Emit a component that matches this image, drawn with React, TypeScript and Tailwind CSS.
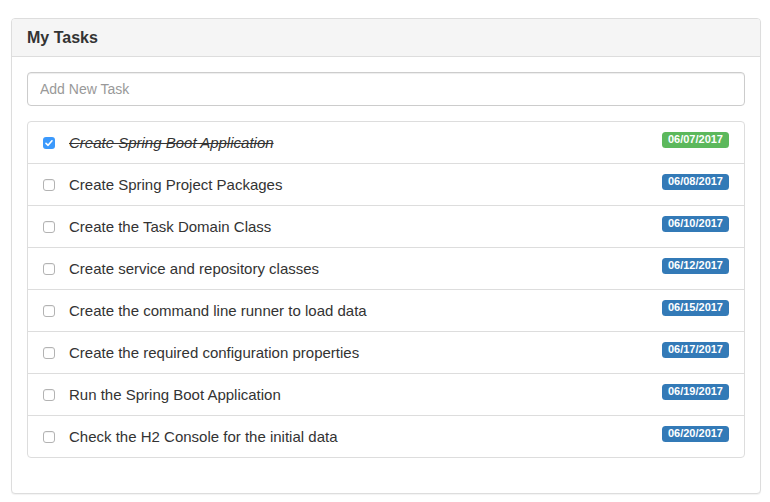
import React from 'react';

interface Task {
  name: string;
  date: string;
  done: boolean;
}

const tasks: Task[] = [
  { name: 'Create Spring Boot Application', date: '06/07/2017', done: true },
  { name: 'Create Spring Project Packages', date: '06/08/2017', done: false },
  { name: 'Create the Task Domain Class', date: '06/10/2017', done: false },
  { name: 'Create service and repository classes', date: '06/12/2017', done: false },
  { name: 'Create the command line runner to load data', date: '06/15/2017', done: false },
  { name: 'Create the required configuration properties', date: '06/17/2017', done: false },
  { name: 'Run the Spring Boot Application', date: '06/19/2017', done: false },
  { name: 'Check the H2 Console for the initial data', date: '06/20/2017', done: false },
];

const Checkbox: React.FC<{ checked: boolean }> = ({ checked }) =>
  checked ? (
    <span className="flex h-[12px] w-[12px] shrink-0 items-center justify-center rounded-[3px] bg-[#3b99fc]">
      <svg viewBox="0 0 12 12" className="h-[12px] w-[12px]">
        <path d="M3 6.3 L5.1 8.3 L9 3.8" fill="none" stroke="white" strokeWidth="1.6" strokeLinecap="round" strokeLinejoin="round" />
      </svg>
    </span>
  ) : (
    <span className="h-[12px] w-[12px] shrink-0 rounded-[3px] border border-[#b3b3b3] bg-white shadow-[inset_0_1px_0_rgba(0,0,0,0.05)]" />
  );

const App: React.FC = () => {
  return (
    <div
      className="min-h-[502px] bg-white pt-[18px] pl-[11px] pr-[9px] text-[14px] text-[#333]"
      style={{ fontFamily: '"Liberation Sans", Arial, sans-serif' }}
    >
      {/* Panel */}
      <div className="rounded-[4px] border border-[#ddd] bg-white shadow-[0_1px_1px_rgba(0,0,0,0.05)]">
        <div className="rounded-t-[3px] border-b border-[#ddd] bg-[#f5f5f5] px-[15px] py-[10px]">
          <h3 className="text-[16px] font-bold leading-[17px] text-[#333]">My Tasks</h3>
        </div>
        <div className="p-[15px]">
          <input
            type="text"
            placeholder="Add New Task"
            className="block h-[34px] w-full rounded-[4px] border border-[#ccc] px-3 py-[6px] text-[14px] text-[#555] shadow-[inset_0_1px_1px_rgba(0,0,0,0.075)] outline-none placeholder:text-[#999]"
          />
          <ul className="mt-[15px] mb-[20px]">
            {tasks.map((task, i) => (
              <li
                key={task.name}
                className={`flex h-[43px] items-center border border-[#ddd] px-[15px] ${
                  i === 0 ? 'rounded-t-[4px]' : '-mt-px'
                } ${i === tasks.length - 1 ? 'rounded-b-[4px]' : ''}`}
              >
                <Checkbox checked={task.done} />
                <span
                  className={`ml-[14px] flex-1 text-[15px] leading-[20px] ${
                    task.done ? 'italic line-through' : ''
                  }`}
                >
                  {task.name}
                </span>
                <span
                  className={`-mt-[5px] rounded-[3.5px] px-[6px] pt-[2px] pb-[3px] text-[11px] font-bold leading-none text-white ${
                    task.done ? 'bg-[#5cb85c]' : 'bg-[#337ab7]'
                  }`}
                >
                  {task.date}
                </span>
              </li>
            ))}
          </ul>
        </div>
      </div>
    </div>
  );
};

export default App;
